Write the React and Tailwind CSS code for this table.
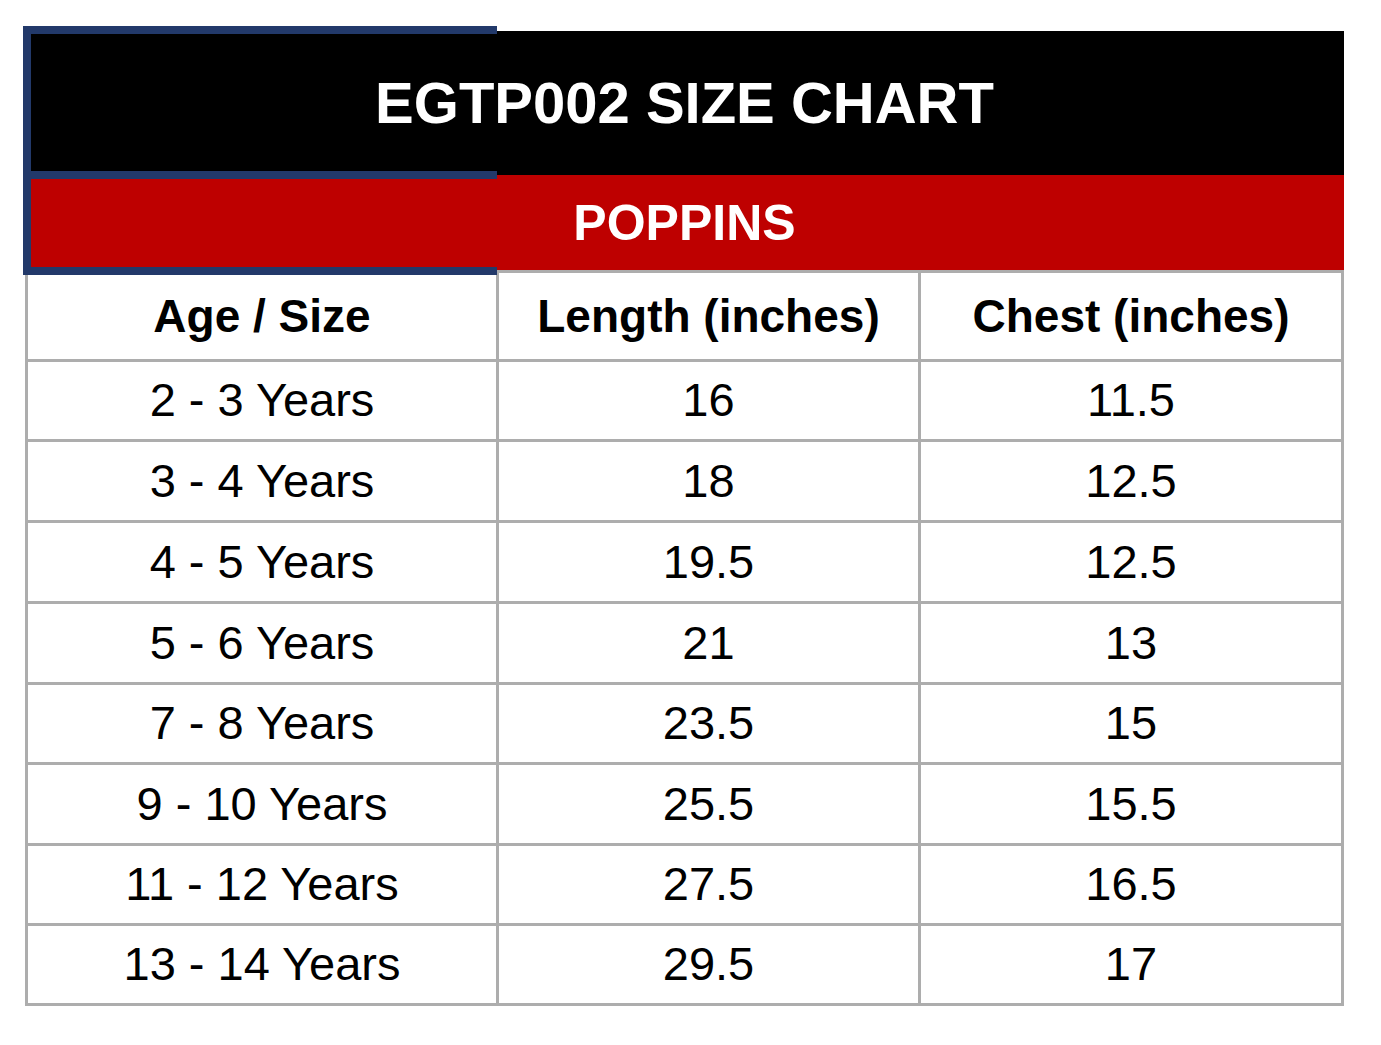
const columns = ['Age / Size', 'Length (inches)', 'Chest (inches)'];

const rows = [
  { age: '2 - 3 Years', length: '16', chest: '11.5', h: 'h-[77px]' },
  { age: '3 - 4 Years', length: '18', chest: '12.5', h: 'h-[78px]' },
  { age: '4 - 5 Years', length: '19.5', chest: '12.5', h: 'h-[78px]' },
  { age: '5 - 6 Years', length: '21', chest: '13', h: 'h-[78px]' },
  { age: '7 - 8 Years', length: '23.5', chest: '15', h: 'h-[77px]' },
  { age: '9 - 10 Years', length: '25.5', chest: '15.5', h: 'h-[78px]' },
  { age: '11 - 12 Years', length: '27.5', chest: '16.5', h: 'h-[77px]' },
  { age: '13 - 14 Years', length: '29.5', chest: '17', h: 'h-[77px]' },
];

const Cell = ({ children, className = '' }) => (
  <div className={`bg-white flex items-center justify-center ${className}`}>{children}</div>
);

const App = () => {
  return (
    <div className="w-[1381px] h-[1045px] bg-white pl-[25px] pt-[31px] font-['Liberation_Sans',Arial,sans-serif] text-black">
      <div className="w-[1319px]">
        {/* title bars */}
        <div className="relative">
          <div className="h-[144px] bg-black flex items-center justify-center">
            <span className="text-[58px] font-bold text-white leading-none">EGTP002 SIZE CHART</span>
          </div>
          <div className="h-[95px] bg-[#be0000] flex items-center justify-center">
            <span className="text-[50px] font-bold text-white leading-none">POPPINS</span>
          </div>
          <div className="absolute left-[-2px] top-[-5px] w-[474px] h-[249px] border-l-8 border-t-8 border-b-8 border-[#22396a]">
            <div className="absolute left-0 right-0 top-[137px] h-[8px] bg-[#22396a]" />
          </div>
        </div>

        {/* table */}
        <div className="grid grid-cols-[468px_419px_420px] gap-[3px] p-[3px] bg-[#adadad]">
          {columns.map((c) => (
            <Cell key={c} className="h-[86px] text-[46px] font-bold">
              {c}
            </Cell>
          ))}
          {rows.map((r) => (
            <div key={r.age} className="contents">
              <Cell className={`${r.h} text-[47px]`}>{r.age}</Cell>
              <Cell className={`${r.h} text-[47px]`}>{r.length}</Cell>
              <Cell className={`${r.h} text-[47px]`}>{r.chest}</Cell>
            </div>
          ))}
        </div>
      </div>
    </div>
  );
};

export default App;
